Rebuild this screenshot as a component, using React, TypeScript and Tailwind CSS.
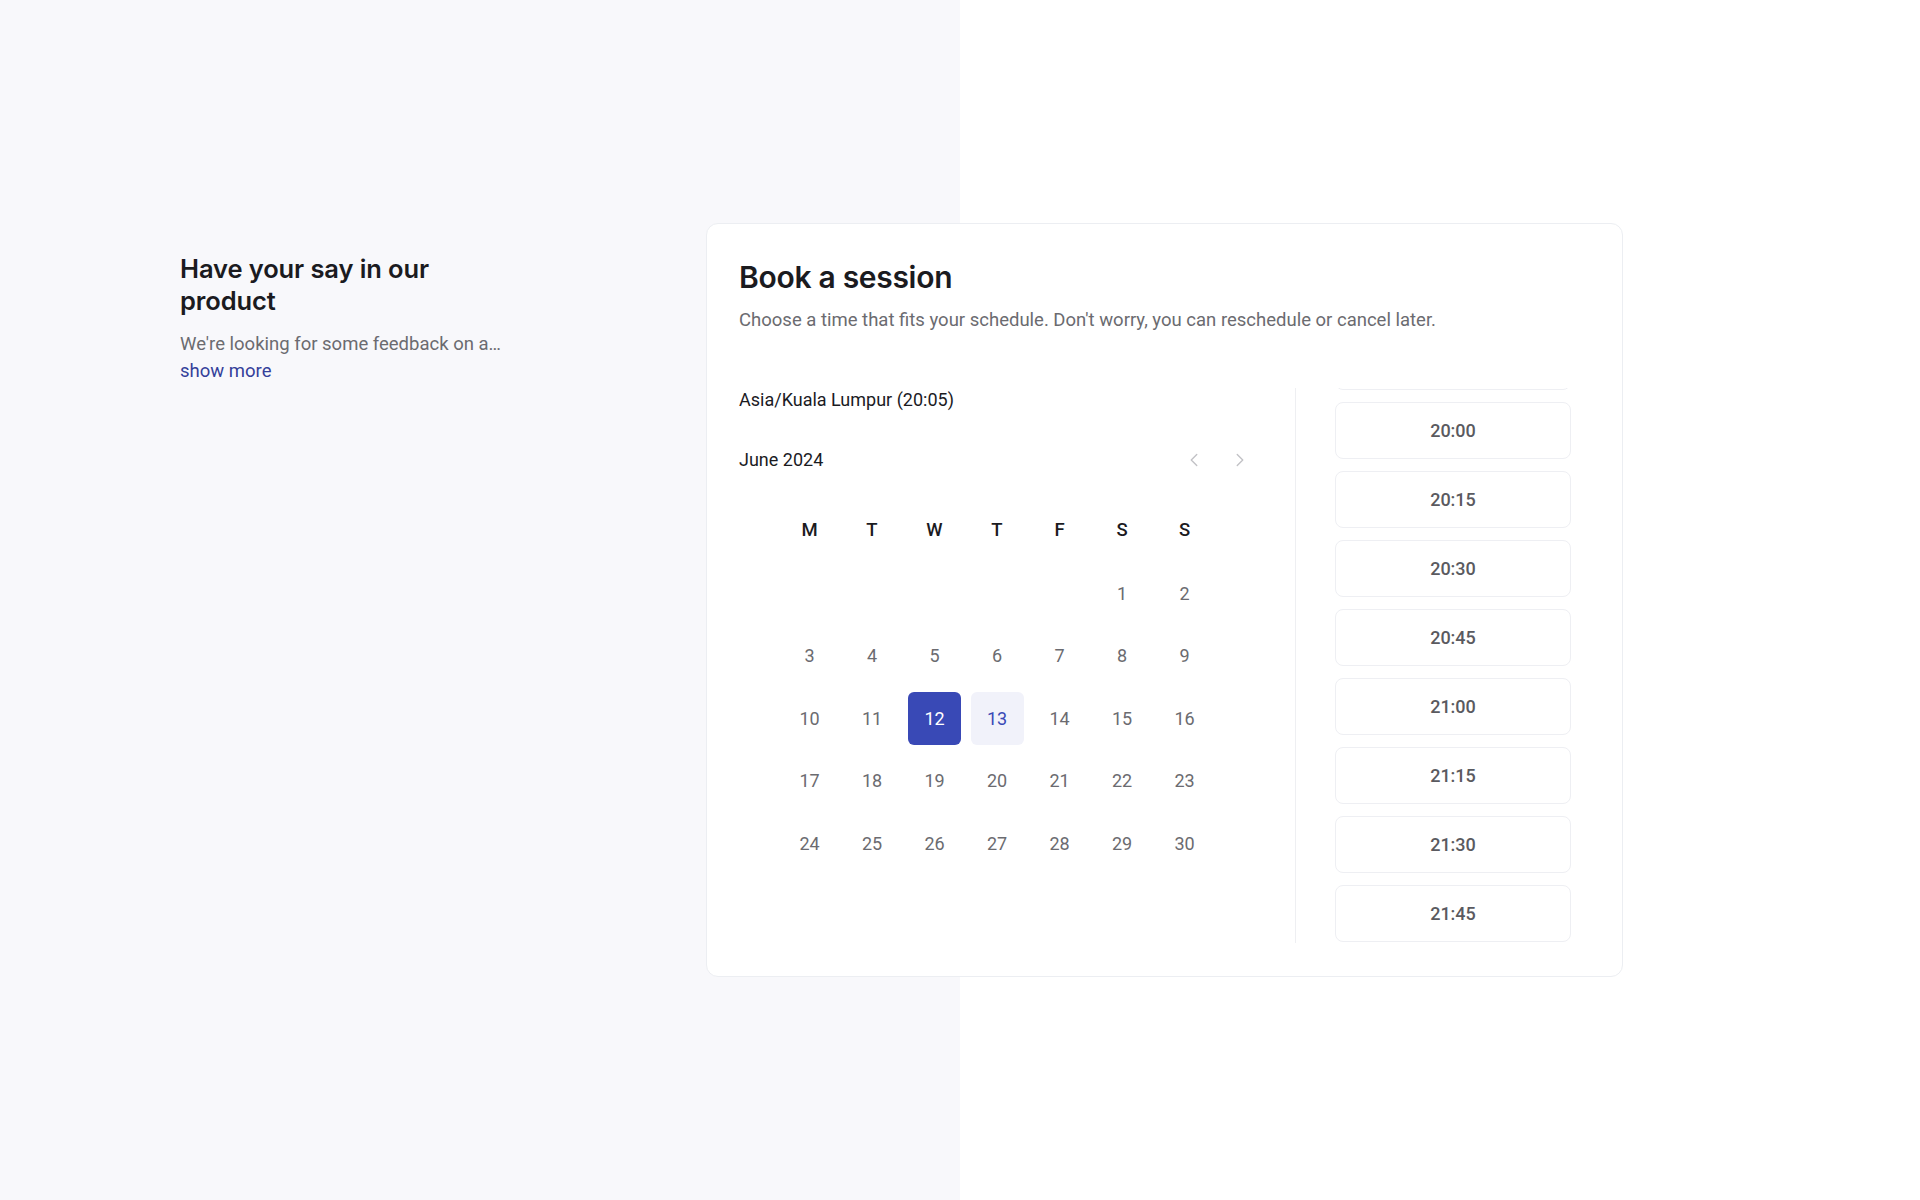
import React, { useEffect, useRef } from "react";
import { ChevronLeft, ChevronRight } from "lucide-react";

const weekdays = ["M", "T", "W", "T", "F", "S", "S"];

// June 2024 starts on a Saturday
const days: (number | null)[] = [null, null, null, null, null, ...Array.from({ length: 30 }, (_, i) => i + 1)];

const slots = ["19:45", "20:00", "20:15", "20:30", "20:45", "21:00", "21:15", "21:30", "21:45", "22:00", "22:15", "22:30"];

export default function App() {
  const listRef = useRef<HTMLDivElement>(null);

  useEffect(() => {
    if (listRef.current) listRef.current.scrollTop = 55;
  }, []);

  return (
    <div className="flex h-[1200px] w-full items-center bg-[linear-gradient(to_right,#f8f8fb_50%,#ffffff_50%)] pl-[180px] font-['Roboto',sans-serif]">
      <div className="flex items-start">
        {/* Intro */}
        <div className="mt-[30px] w-[330px]">
          <h2 className="font-['Inter',sans-serif] text-[25.5px] font-semibold leading-[32px] tracking-[-0.1px] text-[#1b1b1f]">
            Have your say in our product
          </h2>
          <p className="mt-[14px] whitespace-nowrap text-[18.5px] leading-[27px] text-[#6b6b70]">
            We're looking for some feedback on a…
          </p>
          <a href="#" className="text-[18.5px] leading-[27px] text-[#34409a]">
            show more
          </a>
        </div>

        {/* Booking card */}
        <div className="ml-[196px] w-[917px] rounded-xl border border-[#eceef2] bg-white px-8 pb-[33px] pt-[34px]">
          <h1 className="font-['Inter',sans-serif] text-[30px] font-semibold leading-[38px] tracking-[-0.3px] text-[#1b1b1f]">
            Book a session
          </h1>
          <p className="mt-[12px] text-[18.5px] leading-[24px] text-[#6b6b70]">
            Choose a time that fits your schedule. Don't worry, you can reschedule or cancel later.
          </p>

          <div className="mt-[56px] flex h-[555px]">
            {/* Calendar */}
            <div className="w-[556px] pr-[40px]">
              <div className="text-[18px] leading-[24px] text-[#1b1b1f]">Asia/Kuala Lumpur (20:05)</div>
              <div className="mt-[36px] flex items-center justify-between">
                <span className="text-[18px] leading-[24px] text-[#1b1b1f]">June 2024</span>
                <div className="mr-[3px] flex items-center gap-[22px] text-[#c2c2c6]">
                  <button className="flex h-6 w-6 items-center justify-center">
                    <ChevronLeft size={22} strokeWidth={1.5} />
                  </button>
                  <button className="flex h-6 w-6 items-center justify-center">
                    <ChevronRight size={22} strokeWidth={1.5} />
                  </button>
                </div>
              </div>

              <div className="ml-[44px] mt-[32px] grid w-[428px] grid-cols-[repeat(7,53px)] gap-x-[9.5px] gap-y-[9.6px]">
                {weekdays.map((d, i) => (
                  <div key={"w" + i} className="flex h-[53px] items-center justify-center text-[18.5px] font-medium text-[#1b1b1f]">
                    {d}
                  </div>
                ))}
                {days.map((d, i) =>
                  d === null ? (
                    <div key={"e" + i} className="h-[53px]" />
                  ) : d === 12 ? (
                    <button key={d} className="flex h-[53px] items-center justify-center rounded-md bg-[#3949b6] text-[18px] text-white">
                      {d}
                    </button>
                  ) : d === 13 ? (
                    <button key={d} className="flex h-[53px] items-center justify-center rounded-md bg-[#f1f2fa] text-[18px] text-[#3949b6]">
                      {d}
                    </button>
                  ) : (
                    <button key={d} className="flex h-[53px] items-center justify-center text-[18px] text-[#6b6b70]">
                      {d}
                    </button>
                  )
                )}
              </div>
            </div>

            {/* Time slots */}
            <div className="flex-1 border-l border-[#eeeff2] pl-[39px]">
              <div ref={listRef} className="h-full overflow-y-auto [scrollbar-width:none]">
                <div className="flex w-[236px] flex-col gap-3">
                  {slots.map((s) => (
                    <button
                      key={s}
                      className="flex h-[57px] shrink-0 items-center justify-center rounded-lg border border-[#eeeff3] bg-white text-[18px] font-medium text-[#5a5a60]"
                    >
                      {s}
                    </button>
                  ))}
                </div>
              </div>
            </div>
          </div>
        </div>
      </div>
    </div>
  );
}
